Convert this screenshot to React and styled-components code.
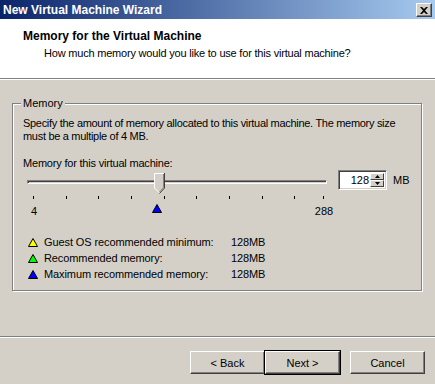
import styled, { createGlobalStyle } from 'styled-components'

const GlobalStyle = createGlobalStyle`
  body {
    margin: 0;
    background: #d4d0c8;
    font-family: "Liberation Sans", Arial, sans-serif;
    font-size: 11px;
    color: #000;
  }
`

const Window = styled.div`
  width: 435px;
  height: 384px;
  display: flex;
  flex-direction: column;
  background: #d4d0c8;
  overflow: hidden;
`

const TitleBar = styled.div`
  height: 19px;
  display: flex;
  align-items: center;
  justify-content: space-between;
  padding: 0 3px 0 3px;
  background: linear-gradient(to right, #0a246a, #a6caf0);
  color: #fff;
  font-weight: bold;
  font-size: 12px;
`

const CloseButton = styled.div`
  width: 16px;
  height: 14px;
  margin-top: 1px;
  box-sizing: border-box;
  background: #d4d0c8;
  border-top: 1px solid #fff;
  border-left: 1px solid #fff;
  border-right: 1px solid #404040;
  border-bottom: 1px solid #404040;
  box-shadow: inset -1px -1px 0 #808080;
  display: flex;
  align-items: center;
  justify-content: center;
`

const Header = styled.div`
  height: 59px;
  background: #fff;
  box-sizing: border-box;
  padding: 10px 0 0 23px;
`

const HeaderTitle = styled.div`
  font-weight: bold;
  font-size: 12px;
  line-height: 14px;
`

const HeaderSub = styled.div`
  margin-top: 3px;
  padding-left: 21px;
  line-height: 14px;
  letter-spacing: -0.2px;
`

const Separator = styled.div`
  height: 0;
  border-top: 1px solid #808080;
  border-bottom: 1px solid #fff;
`

const Body = styled.div`
  flex: 1;
  padding: 17px 13px 0 12px;
`

const Group = styled.fieldset`
  margin: 0;
  height: 194px;
  box-sizing: border-box;
  border: 1px solid #808080;
  box-shadow: inset 1px 1px 0 #fff, 1px 1px 0 #fff;
  padding: 7px 10px 0 10px;
`

const Legend = styled.legend`
  padding: 0 2px;
  margin-left: -2px;
  background: #d4d0c8;
  line-height: 13px;
`

const Paragraph = styled.p`
  margin: 0;
  line-height: 13px;
  white-space: nowrap;
  letter-spacing: -0.3px;
`

const FieldLabel = styled.div`
  margin-top: 14px;
  line-height: 13px;
  letter-spacing: -0.2px;
`

const SliderRow = styled.div`
  display: flex;
  align-items: flex-start;
  margin-top: 3px;
`

const SliderArea = styled.div`
  position: relative;
  width: 300px;
  height: 44px;
  margin-left: 4px;
`

const Track = styled.div`
  position: absolute;
  left: 0;
  right: 0;
  top: 7px;
  height: 2px;
  border-top: 1px solid #808080;
  border-left: 1px solid #808080;
  border-bottom: 1px solid #fff;
  border-right: 1px solid #fff;
  box-shadow: inset 1px 1px 0 #404040;
`

const Tick = styled.div`
  position: absolute;
  top: 23px;
  width: 1px;
  height: 3px;
  background: #000;
`

const ScaleLabel = styled.div`
  position: absolute;
  top: 32px;
  line-height: 13px;
  transform: translateX(-50%);
`

const Marker = styled.svg`
  position: absolute;
  top: 31px;
`

const Thumb = styled.svg`
  position: absolute;
  top: 0;
`

const SpinGroup = styled.div`
  display: flex;
  align-items: center;
  margin-left: 11px;
  margin-top: -3px;
`

const SpinBox = styled.div`
  width: 49px;
  height: 20px;
  box-sizing: border-box;
  background: #fff;
  border-top: 1px solid #808080;
  border-left: 1px solid #808080;
  border-right: 1px solid #fff;
  border-bottom: 1px solid #fff;
  box-shadow: inset 1px 1px 0 #404040, inset -1px -1px 0 #d4d0c8;
  display: flex;
  padding: 2px;
`

const SpinValue = styled.div`
  flex: 1;
  text-align: right;
  line-height: 14px;
  padding-right: 1px;
`

const SpinButtons = styled.div`
  width: 14px;
  display: flex;
  flex-direction: column;
`

const SpinButton = styled.div`
  flex: 1;
  box-sizing: border-box;
  background: #d4d0c8;
  border-top: 1px solid #fff;
  border-left: 1px solid #fff;
  border-right: 1px solid #404040;
  border-bottom: 1px solid #404040;
  display: flex;
  align-items: center;
  justify-content: center;
`

const Unit = styled.span`
  margin-left: 6px;
`

const Legends = styled.div`
  margin-top: 19px;
  display: grid;
  grid-template-columns: 16px 187px auto;
  row-gap: 3px;
  align-items: center;
  padding-left: 5px;
`

const LegendText = styled.div`
  line-height: 13px;
  letter-spacing: -0.1px;
`

const Footer = styled.div`
  height: 46px;
  display: flex;
  justify-content: flex-end;
  align-items: flex-start;
  padding: 13px 10px 0 0;
  box-sizing: border-box;
`

const Button = styled.div`
  width: 75px;
  height: 23px;
  box-sizing: border-box;
  display: flex;
  align-items: center;
  justify-content: center;
  border-top: 1px solid #fff;
  border-left: 1px solid #fff;
  border-right: 1px solid #404040;
  border-bottom: 1px solid #404040;
  box-shadow: inset -1px -1px 0 #808080;
  margin-left: ${(p) => p.$gap || 0}px;
  outline: ${(p) => (p.$default ? '1px solid #000' : 'none')};
`

const Triangle = ({ color }) => (
  <svg width="10" height="9" viewBox="0 0 10 9">
    <polygon points="5,0.5 9.5,8.5 0.5,8.5" fill={color} stroke="#000" strokeWidth="1" />
  </svg>
)

const min = 4
const max = 288
const width = 291
const value = 128
const pos = (v) => 6 + ((v - min) / (max - min)) * (width - 1)
const ticks = [4, 36, 68, 100, 132, 164, 196, 228, 260, 288]

function App() {
  return (
    <Window>
      <GlobalStyle />
      <TitleBar>
        <span>New Virtual Machine Wizard</span>
        <CloseButton>
          <svg width="8" height="7" viewBox="0 0 8 7">
            <path d="M0 0 L2 0 L4 2 L6 0 L8 0 L5 3.5 L8 7 L6 7 L4 5 L2 7 L0 7 L3 3.5 Z" fill="#000" />
          </svg>
        </CloseButton>
      </TitleBar>
      <Header>
        <HeaderTitle>Memory for the Virtual Machine</HeaderTitle>
        <HeaderSub>How much memory would you like to use for this virtual machine?</HeaderSub>
      </Header>
      <Separator />
      <Body>
        <Group>
          <Legend>Memory</Legend>
          <Paragraph>
            Specify the amount of memory allocated to this virtual machine. The memory size
            <br />
            must be a multiple of 4 MB.
          </Paragraph>
          <FieldLabel>Memory for this virtual machine:</FieldLabel>
          <SliderRow>
            <SliderArea>
              <Track />
              {ticks.map((t) => (
                <Tick key={t} style={{ left: Math.round(pos(t)) }} />
              ))}
              <ScaleLabel style={{ left: Math.round(pos(4)) + 1 }}>4</ScaleLabel>
              <ScaleLabel style={{ left: Math.round(pos(288)) + 1 }}>288</ScaleLabel>
              <Marker width="10" height="9" viewBox="0 0 10 9" style={{ left: Math.round(pos(value)) - 8 }}>
                <polygon points="5,0.5 9.5,8.5 0.5,8.5" fill="#0000ff" stroke="#000" strokeWidth="1" />
              </Marker>
              <Thumb width="11" height="21" viewBox="0 0 11 21" style={{ left: Math.round(pos(value)) - 6 }}>
                <polygon points="0,0 11,0 11,15 5.5,20.5 0,15" fill="#d4d0c8" />
                <polyline points="0.5,15 0.5,0.5 10,0.5" fill="none" stroke="#fff" strokeWidth="1" />
                <polyline points="10.5,0 10.5,15 5.5,20.5" fill="none" stroke="#404040" strokeWidth="1" />
                <polyline points="9.5,1 9.5,14.6 5.5,19" fill="none" stroke="#808080" strokeWidth="1" />
                <polyline points="0.5,15 5,19.5" fill="none" stroke="#fff" strokeWidth="1" />
              </Thumb>
            </SliderArea>
            <SpinGroup>
              <SpinBox>
                <SpinValue>128</SpinValue>
                <SpinButtons>
                  <SpinButton>
                    <svg width="5" height="3" viewBox="0 0 5 3">
                      <polygon points="2.5,0 5,3 0,3" fill="#000" />
                    </svg>
                  </SpinButton>
                  <SpinButton>
                    <svg width="5" height="3" viewBox="0 0 5 3">
                      <polygon points="0,0 5,0 2.5,3" fill="#000" />
                    </svg>
                  </SpinButton>
                </SpinButtons>
              </SpinBox>
              <Unit>MB</Unit>
            </SpinGroup>
          </SliderRow>
          <Legends>
            <Triangle color="#ffff00" />
            <LegendText>Guest OS recommended minimum:</LegendText>
            <LegendText>128MB</LegendText>
            <Triangle color="#00ff00" />
            <LegendText>Recommended memory:</LegendText>
            <LegendText>128MB</LegendText>
            <Triangle color="#0000ff" />
            <LegendText>Maximum recommended memory:</LegendText>
            <LegendText>128MB</LegendText>
          </Legends>
        </Group>
      </Body>
      <Separator />
      <Footer>
        <Button>&lt; Back</Button>
        <Button $default>Next &gt;</Button>
        <Button $gap={10}>Cancel</Button>
      </Footer>
    </Window>
  )
}

export default App
